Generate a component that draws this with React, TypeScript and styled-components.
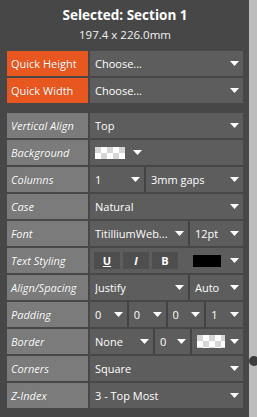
import React from "react";
import styled, { createGlobalStyle } from "styled-components";

const Global = createGlobalStyle`
  html, body { margin: 0; padding: 0; background: #474747; }
  body { font-family: "Open Sans", "Noto Sans", sans-serif; }
  * { box-sizing: border-box; }
`;

const Page = styled.div`
  display: flex;
  width: 257px;
  height: 417px;
  position: relative;
  overflow: hidden;
`;

const Panel = styled.div`
  width: 249px;
  background: #474747;
  padding: 0 6px 0 7px;
`;

const Scroll = styled.div`
  width: 8px;
  background: #bdbdbd;
`;

const Knob = styled.div`
  position: absolute;
  left: 249px;
  top: 356px;
  width: 10px;
  height: 10px;
  border-radius: 50%;
  background: #3c3c3c;
`;

const Header = styled.div`
  display: flex;
  flex-direction: column;
  align-items: center;
  padding-top: 6px;
  height: 51px;
  color: #fff;
`;

const Title = styled.div`
  font-weight: 700;
  font-size: 13.5px;
  line-height: 18px;
`;

const Sub = styled.div`
  font-size: 11.5px;
  line-height: 18px;
  margin-top: 2px;
  color: #f2f2f2;
`;

const Group = styled.div<{ $mt?: number }>`
  display: flex;
  flex-direction: column;
  gap: 2px;
  margin-top: ${(p) => p.$mt ?? 0}px;
`;

const Row = styled.div`
  display: grid;
  grid-template-columns: 81px 153px;
  column-gap: 2px;
  height: 25px;
`;

const Label = styled.div<{ $quick?: boolean }>`
  background: ${(p) => (p.$quick ? "#e8571f" : "#7b7b7b")};
  color: #fff;
  font-size: 11px;
  font-style: ${(p) => (p.$quick ? "normal" : "italic")};
  display: flex;
  align-items: center;
  padding-left: 4px;
  white-space: nowrap;
  overflow: hidden;
  text-shadow: 0 0 1px rgba(0, 0, 0, 0.25);
`;

const Value = styled.div`
  background: #5d5d5d;
  display: flex;
  align-items: stretch;
`;

const Seg = styled.div<{ $w?: number }>`
  ${(p) => (p.$w ? `width: ${p.$w}px; flex: none;` : "flex: 1;")}
  min-width: 0;
  display: flex;
  align-items: center;
  padding: 0 4px 0 5px;
  color: #fff;
  font-size: 11px;
  white-space: nowrap;
  & + & {
    border-left: 2px solid #434343;
  }
`;

const SegText = styled.span`
  flex: 1;
  overflow: hidden;
`;

const Swatch = styled.div<{ $black?: boolean; $w: number; $h: number }>`
  width: ${(p) => p.$w}px;
  height: ${(p) => p.$h}px;
  margin-right: ${(p) => (p.$black ? "auto" : "8px")};
  background: ${(p) =>
    p.$black
      ? "#000"
      : "repeating-conic-gradient(#ffffff 0 25%, #d6d6d6 0 50%) 0 0 / 12px 12px"};
`;

const Btns = styled.div`
  display: flex;
  gap: 3px;
  padding-left: 4px;
  align-items: center;
  width: 98px;
  flex: none;
`;

const Btn = styled.div<{ $u?: boolean; $i?: boolean }>`
  width: 26px;
  height: 17px;
  background: #4e4e4e;
  color: #fff;
  font-size: 11px;
  font-weight: 700;
  display: flex;
  align-items: center;
  justify-content: center;
  text-decoration: ${(p) => (p.$u ? "underline" : "none")};
  font-style: ${(p) => (p.$i ? "italic" : "normal")};
`;

const ArrowSvg = styled.svg`
  flex: none;
  display: block;
`;

const Arrow = () => (
  <ArrowSvg width="9" height="5" viewBox="0 0 9 5">
    <polygon points="0,0 9,0 4.5,5" fill="#fff" />
  </ArrowSvg>
);

const Dd = ({ text, w }: { text: string; w?: number }) => (
  <Seg $w={w}>
    <SegText>{text}</SegText>
    <Arrow />
  </Seg>
);

export default function App() {
  return (
    <>
      <Global />
      <Page>
        <Panel>
          <Header>
            <Title>Selected: Section 1</Title>
            <Sub>197.4 x 226.0mm</Sub>
          </Header>
          <Group>
            <Row>
              <Label $quick>Quick Height</Label>
              <Value><Dd text="Choose..." /></Value>
            </Row>
            <Row>
              <Label $quick>Quick Width</Label>
              <Value><Dd text="Choose..." /></Value>
            </Row>
          </Group>
          <Group $mt={10}>
            <Row>
              <Label>Vertical Align</Label>
              <Value><Dd text="Top" /></Value>
            </Row>
            <Row>
              <Label>Background</Label>
              <Value>
                <Seg>
                  <Swatch $w={30} $h={12} />
                  <Arrow />
                  <SegText />
                </Seg>
              </Value>
            </Row>
            <Row>
              <Label>Columns</Label>
              <Value>
                <Dd text="1" w={54} />
                <Dd text="3mm gaps" />
              </Value>
            </Row>
            <Row>
              <Label>Case</Label>
              <Value><Dd text="Natural" /></Value>
            </Row>
            <Row>
              <Label>Font</Label>
              <Value>
                <Dd text="TitilliumWeb..." w={98} />
                <Dd text="12pt" />
              </Value>
            </Row>
            <Row>
              <Label>Text Styling</Label>
              <Value>
                <Btns>
                  <Btn $u>U</Btn>
                  <Btn $i>I</Btn>
                  <Btn>B</Btn>
                </Btns>
                <Seg>
                  <Swatch $black $w={28} $h={12} />
                  <Arrow />
                </Seg>
              </Value>
            </Row>
            <Row>
              <Label>Align/Spacing</Label>
              <Value>
                <Dd text="Justify" w={98} />
                <Dd text="Auto" />
              </Value>
            </Row>
            <Row>
              <Label>Padding</Label>
              <Value>
                <Dd text="0" />
                <Dd text="0" />
                <Dd text="0" />
                <Dd text="1" />
              </Value>
            </Row>
            <Row>
              <Label>Border</Label>
              <Value>
                <Dd text="None" w={63} />
                <Dd text="0" w={37} />
                <Seg>
                  <Swatch $black={false} $w={28} $h={13} style={{ marginRight: "auto" }} />
                  <Arrow />
                </Seg>
              </Value>
            </Row>
            <Row>
              <Label>Corners</Label>
              <Value><Dd text="Square" /></Value>
            </Row>
            <Row>
              <Label>Z-Index</Label>
              <Value><Dd text="3 - Top Most" /></Value>
            </Row>
          </Group>
        </Panel>
        <Scroll />
        <Knob />
      </Page>
    </>
  );
}
